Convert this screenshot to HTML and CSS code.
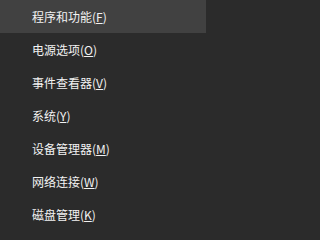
FILE: index.html
```html
<!DOCTYPE html>
<html lang="zh-CN">
<head>
<meta charset="utf-8">
<link rel="stylesheet" href="styles.css">
</head>
<body>
<ul class="menu">
  <li class="item hover">程序和功能(<u>F</u>)</li>
  <li class="item">电源选项(<u>O</u>)</li>
  <li class="item">事件查看器(<u>V</u>)</li>
  <li class="item">系统(<u>Y</u>)</li>
  <li class="item">设备管理器(<u>M</u>)</li>
  <li class="item">网络连接(<u>W</u>)</li>
  <li class="item">磁盘管理(<u>K</u>)</li>
</ul>
</body>
</html>
```
FILE: styles.css
```css
html, body {
  margin: 0;
  padding: 0;
  background: #2b2b2b;
}
.menu {
  list-style: none;
  margin: 0;
  padding: 0;
  width: 206px;
  display: flex;
  flex-direction: column;
}
.item {
  height: 33px;
  display: flex;
  align-items: center;
  padding-left: 32px;
  color: #f2f2f2;
  font-family: "Noto Sans CJK SC", "Noto Sans", sans-serif;
  font-size: 12px;
  line-height: 1;
}
.item u {
  text-decoration: underline;
  text-underline-offset: 1px;
  text-decoration-thickness: 1px;
}
.hover {
  background: #414141;
}
```
